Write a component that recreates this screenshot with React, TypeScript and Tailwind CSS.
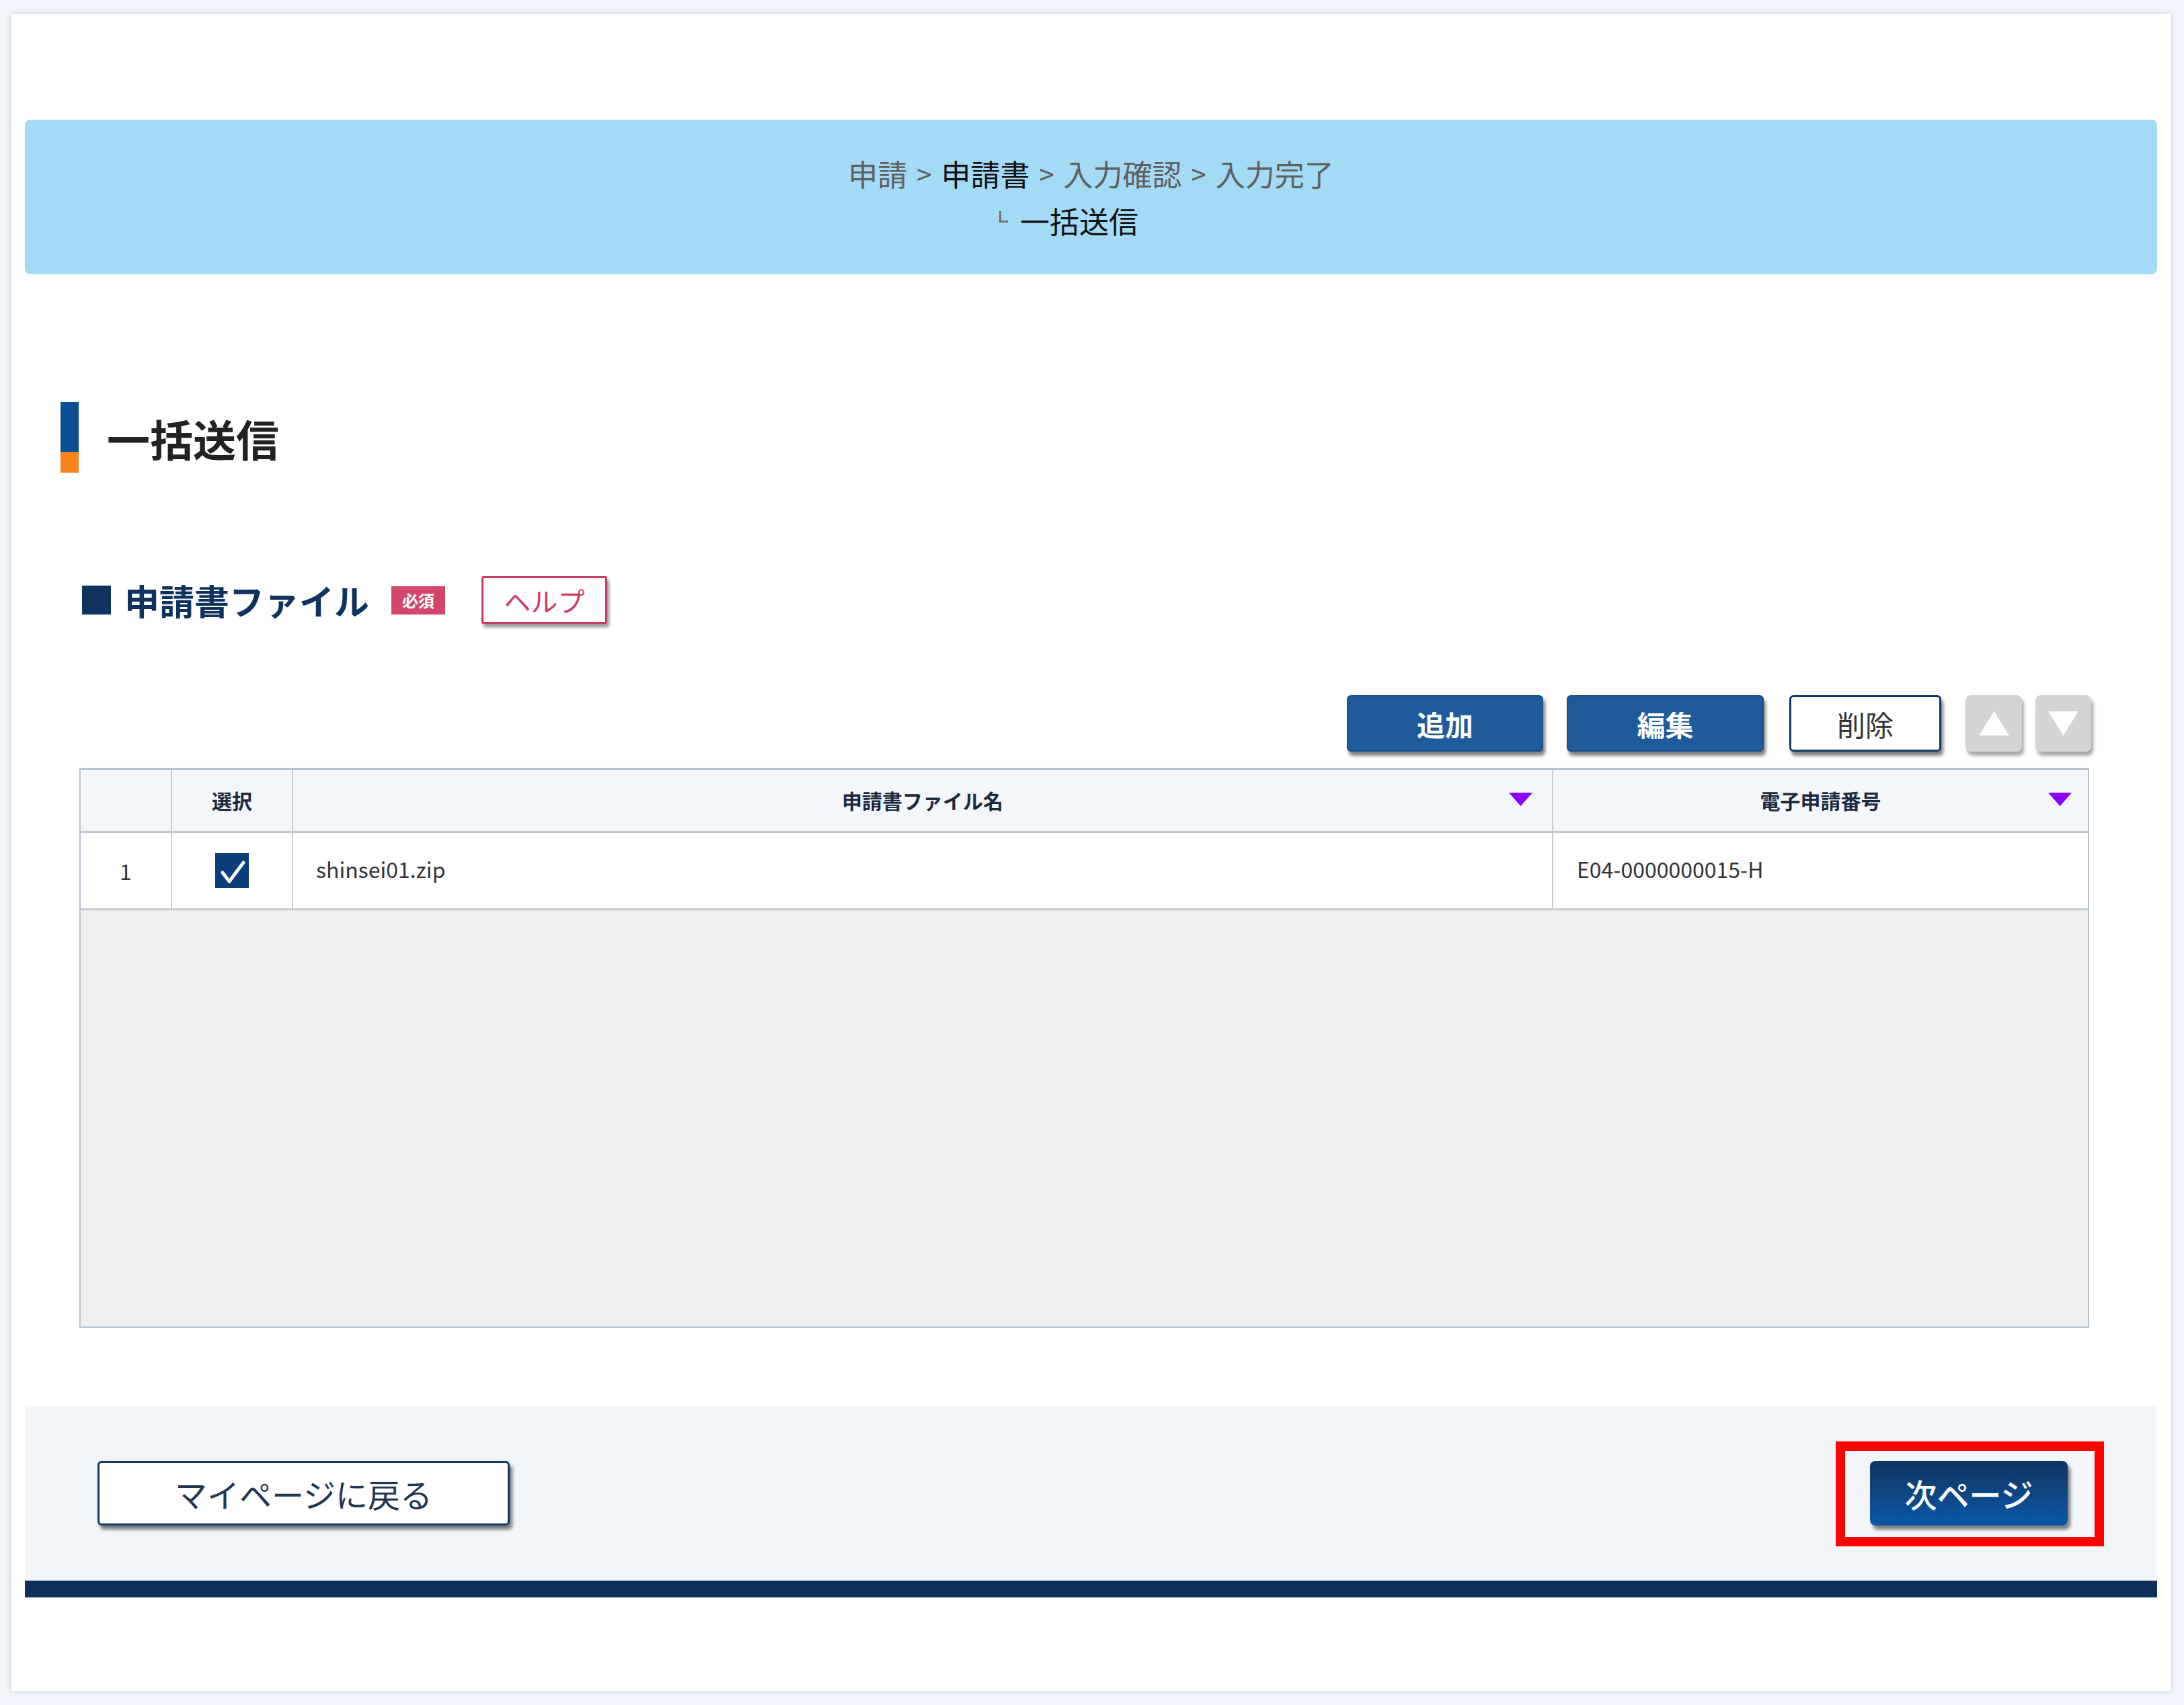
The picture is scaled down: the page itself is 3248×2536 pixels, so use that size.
import React from "react";

function DownTri({ className }: { className?: string }) {
  return (
    <svg viewBox="0 0 35 20" className={className}>
      <polygon points="0,0 35,0 17.5,20" fill="#8a00ff" />
    </svg>
  );
}

export default function App() {
  return (
    <div className="w-[3248px] min-h-[2536px] bg-[#f1f6fc] pt-[21px] pl-[17px] font-['Noto_Sans_CJK_JP','Noto_Sans',sans-serif]">
      <div className="w-[3211px] h-[2494px] bg-white shadow-[0_0_10px_rgba(0,0,0,0.18)] px-[20px] pt-[157px] flex flex-col">
        {/* breadcrumb */}
        <div className="h-[230px] rounded-[8px] bg-[#a3daf5] flex flex-col items-center justify-center">
          <div className="text-[44px] leading-[70px] text-[#606060] flex items-center">
            <span>申請</span>
            <span className="mx-[14px] text-[40px]">&gt;</span>
            <span className="text-[#111]">申請書</span>
            <span className="mx-[14px] text-[40px]">&gt;</span>
            <span>入力確認</span>
            <span className="mx-[14px] text-[40px]">&gt;</span>
            <span>入力完了</span>
          </div>
          <div className="text-[44px] leading-[70px] text-[#111] flex items-center pr-[66px]">
            <span className="inline-block w-[13px] h-[17px] border-l-[3px] border-b-[3px] border-[#777] mr-[18px] -mt-[12px]" />
            <span>一括送信</span>
          </div>
        </div>

        {/* page heading */}
        <div className="mt-[190px] ml-[53px] flex items-center h-[105px]">
          <div className="w-[27px] h-[105px] flex flex-col">
            <div className="h-[74px] bg-[#0c4d94]" />
            <div className="h-[31px] bg-[#f5861f]" />
          </div>
          <div className="ml-[42px] text-[64px] leading-none text-[#222] font-semibold">一括送信</div>
        </div>

        {/* section heading */}
        <div className="mt-[154px] ml-[85px] flex items-center h-[71px]">
          <div className="w-[43px] h-[43px] bg-[#0f335e]" />
          <div className="ml-[20px] text-[52px] leading-none font-bold text-[#0f335e]">申請書ファイル</div>
          <div className="ml-[33px] w-[80px] h-[42px] bg-[#d4456c] text-white text-[24px] font-bold flex items-center justify-center leading-none">
            必須
          </div>
          <div className="ml-[54px] w-[187px] h-[71px] bg-white border-[3px] border-[#cc3c62] rounded-[3px] text-[#cc3c62] text-[40px] flex items-center justify-center leading-none shadow-[3px_5px_4px_rgba(0,0,0,0.4)]">
            ヘルプ
          </div>
        </div>

        {/* toolbar */}
        <div className="mt-[106px] flex justify-end pr-[98px] h-[84px] items-stretch">
          <button className="w-[292px] rounded-[6px] bg-[#1f5a9a] border-2 border-[#1a4f89] text-white text-[42px] font-bold shadow-[3px_6px_5px_rgba(0,0,0,0.5)]">
            追加
          </button>
          <button className="ml-[35px] w-[293px] rounded-[6px] bg-[#1f5a9a] border-2 border-[#1a4f89] text-white text-[42px] font-bold shadow-[3px_6px_5px_rgba(0,0,0,0.5)]">
            編集
          </button>
          <button className="ml-[38px] w-[226px] rounded-[6px] bg-white border-[3px] border-[#123a66] text-[#333] text-[42px] shadow-[3px_6px_5px_rgba(0,0,0,0.5)]">
            削除
          </button>
          <button className="ml-[36px] w-[84px] rounded-[8px] bg-[#d4d4d4] flex items-center justify-center shadow-[3px_6px_5px_rgba(0,0,0,0.35)]">
            <svg viewBox="0 0 45 36" className="w-[45px] h-[36px]">
              <polygon points="22.5,0 45,36 0,36" fill="#ffffff" />
            </svg>
          </button>
          <button className="ml-[20px] w-[83px] rounded-[8px] bg-[#d4d4d4] flex items-center justify-center shadow-[3px_6px_5px_rgba(0,0,0,0.35)]">
            <svg viewBox="0 0 45 36" className="w-[45px] h-[36px]">
              <polygon points="0,0 45,0 22.5,36" fill="#ffffff" />
            </svg>
          </button>
        </div>

        {/* table */}
        <div className="mt-[24px] ml-[81px] w-[2989px] h-[833px] border-2 border-t-[3px] border-[#b5c4d2] bg-[#efefef] flex flex-col">
          <div className="h-[94px] flex bg-[#f3f7fb] border-b-[3px] border-[#c3c6ca] text-[30px] font-bold text-[#1b2a3e]">
            <div className="w-[136px] border-r-2 border-[#c4cad1]" />
            <div className="w-[180px] border-r-2 border-[#c4cad1] flex items-center justify-center">選択</div>
            <div className="w-[1874px] border-r-2 border-[#c4cad1] relative flex items-center justify-center">
              申請書ファイル名
              <DownTri className="absolute right-[29px] top-[34px] w-[35px] h-[20px]" />
            </div>
            <div className="flex-1 relative flex items-center justify-center">
              電子申請番号
              <DownTri className="absolute right-[24px] top-[34px] w-[35px] h-[20px]" />
            </div>
          </div>
          <div className="h-[115px] flex bg-white border-b-[3px] border-[#c6c9cc] text-[32px] text-[#333]">
            <div className="w-[136px] border-r-2 border-[#c4cad1] flex items-center justify-center">1</div>
            <div className="w-[180px] border-r-2 border-[#c4cad1] flex items-center justify-center">
              <div className="w-[50px] h-[52px] bg-[#0b3d7a] flex items-center justify-center">
                <svg viewBox="0 0 50 52" className="w-[50px] h-[52px]">
                  <polyline points="11,29 21,42 42,14" fill="none" stroke="#ffffff" strokeWidth="5" strokeLinecap="round" strokeLinejoin="round" />
                </svg>
              </div>
            </div>
            <div className="w-[1874px] border-r-2 border-[#c4cad1] flex items-center pl-[34px] pb-[6px]">shinsei01.zip</div>
            <div className="flex-1 flex items-center pl-[35px] pb-[6px]">E04-0000000015-H</div>
          </div>
          <div className="flex-1" />
        </div>

        {/* footer */}
        <div className="mt-[116px] h-[260px] bg-[#f2f6f9] relative flex items-center justify-between pl-[108px] pr-[133px]">
          <button className="w-[613px] h-[96px] bg-white border-[3px] border-[#123a66] rounded-[6px] text-[48px] text-[#1f3550] shadow-[4px_6px_5px_rgba(0,0,0,0.5)]">
            マイページに戻る
          </button>
          <button className="w-[294px] h-[96px] rounded-[8px] bg-gradient-to-b from-[#0e3462] to-[#0a58a8] text-white text-[48px] font-medium shadow-[4px_6px_5px_rgba(0,0,0,0.5)]">
            次ページ
          </button>
          <div className="absolute left-[2693px] top-[53px] w-[399px] h-[156px] border-[14px] border-[#ff0000]" />
        </div>
        <div className="h-[25px] bg-[#0e3058]" />
      </div>
    </div>
  );
}
